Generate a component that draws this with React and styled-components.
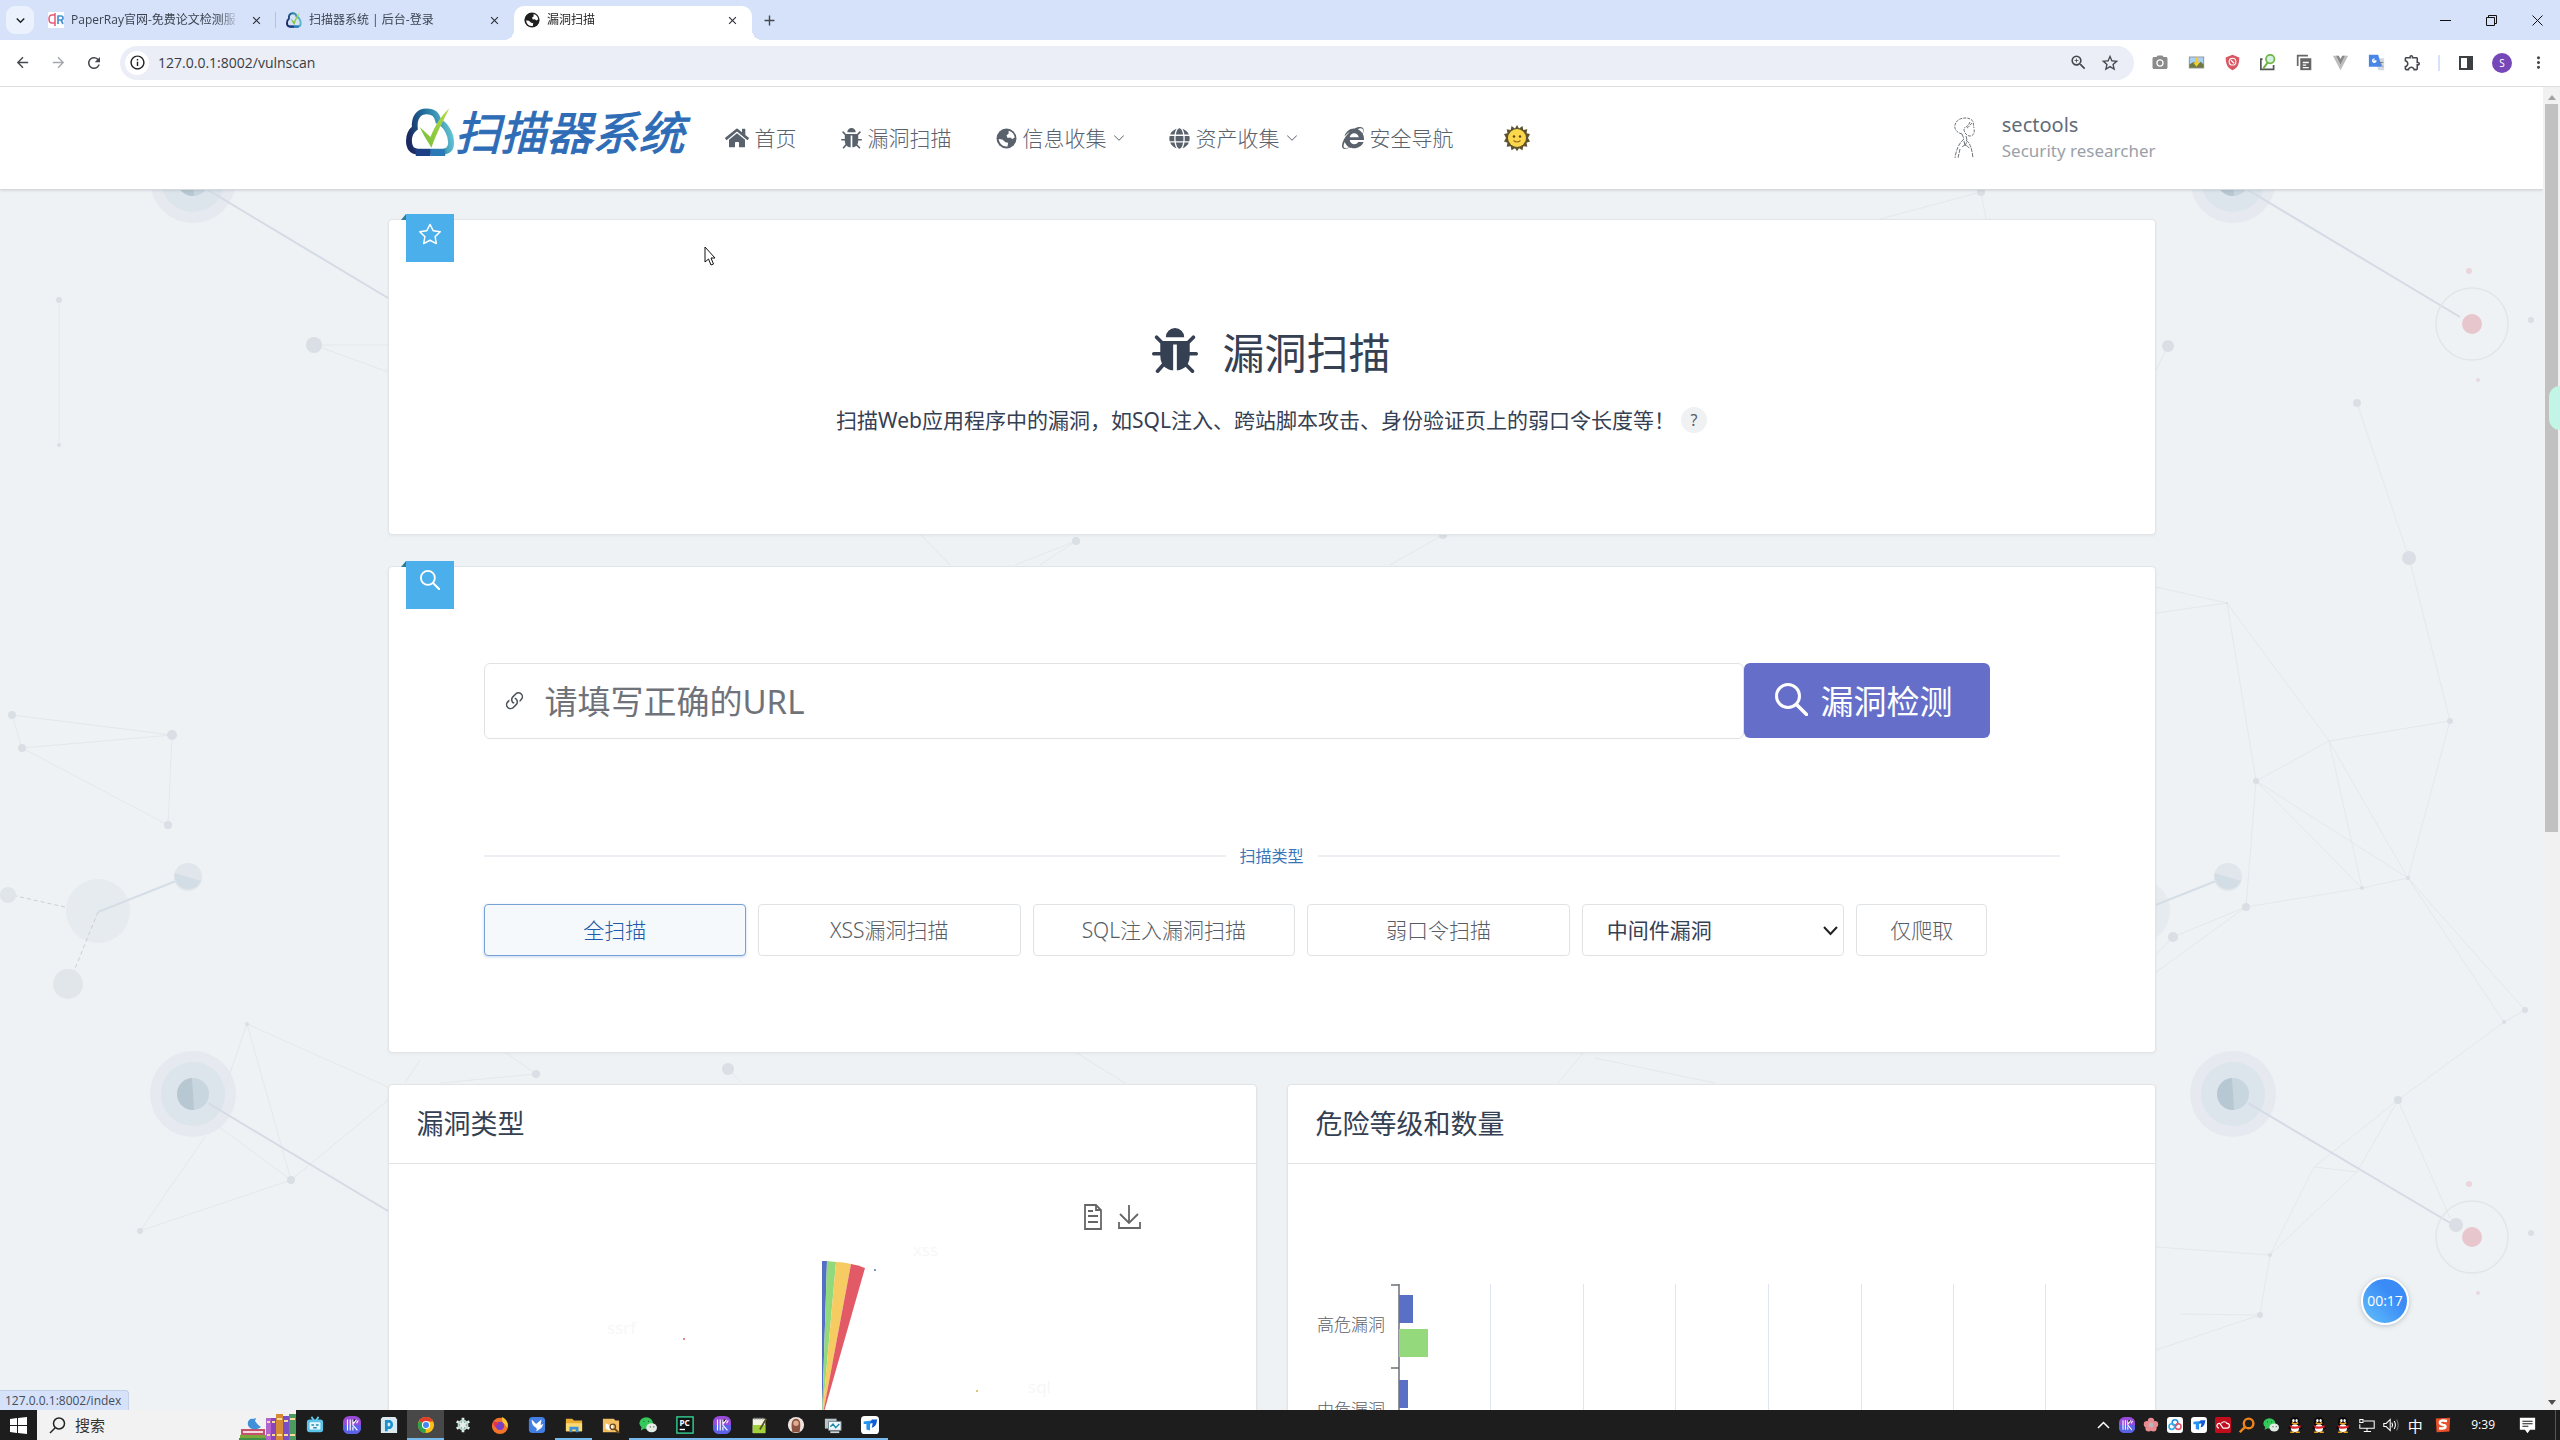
import React, { useState } from 'react';
import styled, { createGlobalStyle, css } from 'styled-components';
import { FaHome, FaGlobe, FaInternetExplorer } from 'react-icons/fa';
import { BsStar, BsLink45Deg, BsChevronDown } from 'react-icons/bs';
import {
  MdArrowBack,
  MdArrowForward,
  MdRefresh,
  MdInfoOutline,
  MdZoomIn,
  MdStarBorder,
  MdPhotoCamera,
  MdOutlineExtension,
  MdMoreVert,
  MdClose,
  MdAdd,
  MdKeyboardArrowDown,
} from 'react-icons/md';

const GlobalStyle = createGlobalStyle`
  * {
    box-sizing: border-box;
  }
  body {
    margin: 0;
    font-family: "Noto Sans", "Noto Sans CJK SC", sans-serif;
    font-size: 21px;
    line-height: 30px;
    color: #354052;
  }
  button, input, select {
    font-family: inherit;
    font-size: inherit;
    color: inherit;
  }
  button {
    padding: 0;
    border: 0;
    background: none;
    cursor: pointer;
  }
  a {
    color: inherit;
    text-decoration: none;
  }
  h1, h2, p {
    margin: 0;
    font-weight: 400;
  }
  svg {
    display: block;
    flex: none;
  }
`;

const Screen = styled.div`
  display: flex;
  flex-direction: column;
  height: 100vh;
  overflow: hidden;
`;

/* ---------- browser ---------- */

const TabStrip = styled.div`
  display: flex;
  align-items: center;
  height: 40px;
  padding-left: 6px;
  background: #d5e2fa;
  font-family: "Open Sans", "Noto Sans CJK SC", sans-serif;
  font-size: 12px;
  line-height: 18px;
  color: #3c4350;
`;

const TabSearch = styled.button`
  display: grid;
  place-items: center;
  width: 28px;
  height: 28px;
  margin-right: 4px;
  border-radius: 9px;
  background: #ebf2fe;
  color: #1f1f1f;
`;

const Tab = styled.div`
  position: relative;
  display: flex;
  align-items: center;
  gap: 7px;
  width: 238px;
  height: 34px;
  margin-top: 6px;
  padding: 0 10px 6px;
  border-radius: 10px 10px 0 0;
  ${({ $active }) =>
    $active &&
    css`
      background: #fff;
      color: #1f1f1f;

      &::before, &::after {
        content: '';
        position: absolute;
        bottom: 0;
        width: 10px;
        height: 10px;
      }
      &::before {
        right: 100%;
        background: radial-gradient(circle at 0 0, transparent 10px, #fff 10px);
      }
      &::after {
        left: 100%;
        background: radial-gradient(circle at 100% 0, transparent 10px, #fff 10px);
      }
    `}
`;

const TabTitle = styled.span`
  flex: 1;
  overflow: hidden;
  white-space: nowrap;
  mask-image: linear-gradient(to right, #000 88%, transparent);
`;

const PlainIconButton = styled.button`
  display: grid;
  place-items: center;
  width: ${({ $width }) => $width || 36}px;
  height: 28px;
  color: ${({ $color }) => $color || '#45494e'};
`;

const TabDivider = styled.span`
  width: 1px;
  height: 16px;
  margin-left: -1px;
  background: #a9c4f2;
`;

const WindowControls = styled.div`
  display: flex;
  margin-left: auto;
`;

const Toolbar = styled.div`
  display: flex;
  align-items: center;
  height: 47px;
  padding: 0 4px 1px;
  border-bottom: 1px solid #dcdee1;
  background: #fff;
`;

const AddressBar = styled.label`
  display: flex;
  flex: 1;
  align-items: center;
  height: 34px;
  margin: 0 8px;
  padding: 0 8px 0 5px;
  border-radius: 17px;
  background: #ebeef6;
`;

const SiteInfo = styled.span`
  display: grid;
  place-items: center;
  width: 24px;
  height: 24px;
  margin-right: 9px;
  border-radius: 50%;
  background: #fff;
  color: #202124;
`;

const AddressInput = styled.input`
  flex: 1;
  padding: 0;
  border: 0;
  outline: 0;
  background: none;
  font-family: "Open Sans", sans-serif;
  font-size: 14px;
  color: #3a3d42;
`;

const ToolDivider = styled.span`
  width: 2px;
  height: 16px;
  margin: 0 8px;
  background: #d5e2fa;
`;

const ProfileDot = styled.span`
  display: grid;
  place-items: center;
  width: 20px;
  height: 20px;
  border-radius: 50%;
  background: #7647b8;
  color: #fff;
  font-size: 10px;
  line-height: 20px;
`;

/* ---------- page ---------- */

const Viewport = styled.div`
  position: relative;
  display: flex;
  flex: 1;
  min-height: 0;
  background: #eef2f4;
`;

const Page = styled.div`
  position: relative;
  flex: 1;
  min-width: 0;
  overflow: hidden;
`;

const Backdrop = styled.svg`
  position: absolute;
  inset: 0;
  width: 100%;
  height: 100%;
`;

const Container = styled.div`
  position: relative;
  max-width: 1768px;
  margin: 0 auto;
`;

const SiteHeader = styled.header`
  position: relative;
  height: 103px;
  border-bottom: 1px solid #d6d9dc;
  background: #fff;
  box-shadow: 0 1px 2px rgba(60, 70, 80, 0.12);
`;

const HeaderRow = styled(Container)`
  display: flex;
  align-items: center;
  height: 102px;
  padding-left: 18px;
`;

const Brand = styled.a`
  display: flex;
  align-items: center;
  width: 283px;
  margin: -12px 36px 0 0;
  font-size: 46px;
  line-height: 56px;
  font-style: italic;
  color: #2f6cb6;
  -webkit-text-stroke: 1px #2f6cb6;
  white-space: nowrap;
`;

const Nav = styled.nav`
  display: flex;
  align-items: center;
  gap: 44px;
`;

const navItem = css`
  display: flex;
  align-items: center;
  gap: 6px;
  font-size: 21px;
  font-weight: 300;
  line-height: 30px;
  color: #59616c;
  white-space: nowrap;
`;

const NavLink = styled.a`
  ${navItem}
`;

const NavMenu = styled.button`
  ${navItem}
`;

const ThemeToggle = styled.button`
  margin-left: 6px;
`;

const User = styled.div`
  display: flex;
  align-items: center;
  gap: 26px;
  margin-left: auto;
`;

const UserName = styled.div`
  font-size: 20px;
  line-height: 26px;
  color: #626b78;
`;

const UserRole = styled.div`
  font-size: 17px;
  line-height: 26px;
  color: #9a9fa8;
`;

const Content = styled(Container)`
  display: flex;
  flex-direction: column;
  gap: 31px;
  padding-top: 29px;
`;

const Card = styled.section`
  position: relative;
  flex: 1;
  min-width: 0;
  border: 1px solid #e1e5e8;
  border-radius: 4px;
  background: #fff;
  box-shadow: 0 1px 3px rgba(35, 46, 60, 0.05);
`;

const Ribbon = styled.div`
  position: absolute;
  top: -6px;
  left: 17px;
  display: flex;
  justify-content: center;
  width: 48px;
  height: 48px;
  padding-top: 9px;
  background: #4bafeb;
  color: #fff;

  &::before {
    content: '';
    position: absolute;
    top: 0;
    right: 100%;
    border-bottom: 6px solid #2c7d97;
    border-left: 5px solid transparent;
  }
`;

const Hero = styled.div`
  display: flex;
  flex-direction: column;
  align-items: center;
  gap: 21px;
  padding: 102px 16px 99px;
`;

const HeroTitle = styled.h1`
  display: flex;
  align-items: center;
  gap: 24px;
  font-size: 42px;
  line-height: 62px;

  svg {
    margin-bottom: 4px;
  }
`;

const HeroText = styled.p`
  display: flex;
  align-items: center;
  gap: 6px;
  line-height: 30px;
`;

const Help = styled.button`
  width: 26px;
  height: 26px;
  border-radius: 50%;
  background: #f0f1f3;
  font-size: 16px;
  line-height: 26px;
  color: #555d69;
`;

const ScanForm = styled.form`
  padding: 96px 95px;
`;

const SearchRow = styled.div`
  display: flex;
  margin-right: 70px;
`;

const UrlField = styled.label`
  display: flex;
  flex: 1;
  align-items: center;
  gap: 18px;
  height: 76px;
  padding: 0 17px;
  border: 1px solid #e0e3e6;
  border-radius: 6px;
  color: #4d535b;
`;

const UrlInput = styled.input`
  flex: 1;
  min-width: 0;
  padding: 0;
  border: 0;
  outline: 0;
  background: none;
  font-size: 33px;

  &::placeholder {
    color: #6f7379;
    opacity: 1;
  }
`;

const ScanButton = styled.button`
  display: flex;
  align-items: center;
  justify-content: center;
  gap: 13px;
  width: 246px;
  height: 75px;
  padding: 0 6px 2px 0;
  border-radius: 6px;
  background: #656fc9;
  font-size: 33px;
  color: #fff;
`;

const Divider = styled.div`
  display: flex;
  align-items: center;
  gap: 14px;
  margin: 105px 0 36px;
  font-size: 16px;
  line-height: 24px;
  color: #3a75b8;

  &::before, &::after {
    content: '';
    flex: 1;
    height: 2px;
    background: #eceff3;
  }
`;

const Options = styled.div`
  display: grid;
  grid-template-columns: repeat(5, 2fr) 1fr;
  gap: 12px;
  margin-right: 72px;
`;

const Option = styled.button`
  height: 52px;
  padding-bottom: 2px;
  border: 1px solid ${({ $active }) => ($active ? '#78a2d6' : '#e0e3e6')};
  border-radius: 4px;
  background: ${({ $active }) => ($active ? '#f5f9fc' : '#fff')};
  box-shadow: ${({ $active }) => ($active ? '0 1px 3px rgba(60, 120, 210, 0.3)' : 'none')};
  font-weight: 300;
  color: ${({ $active }) => ($active ? '#1f5aa8' : '#575d65')};
`;

const SelectBox = styled.span`
  position: relative;
  display: block;

  svg {
    position: absolute;
    top: 19px;
    right: 6px;
    color: #222;
    pointer-events: none;
  }
`;

const MiddlewareSelect = styled.select`
  width: 100%;
  height: 52px;
  padding: 0 24px;
  border: 1px solid #e0e3e6;
  border-radius: 4px;
  background: #fff;
  appearance: none;
`;

const ChartRow = styled.div`
  display: flex;
  gap: 30px;
`;

const CardTitle = styled.h2`
  padding: 19px 28px;
  border-bottom: 1px solid #e1e5e8;
  font-size: 27px;
  line-height: 40px;
`;

const ChartArea = styled.div`
  height: 520px;
  overflow: hidden;
`;

const ScrollTrack = styled.div`
  display: flex;
  flex-direction: column;
  align-items: center;
  width: 17px;
  padding: 7px 0 4px;
  background: #f1f1f1;
`;

const ScrollThumb = styled.div`
  flex: 0 1 728px;
  width: 13px;
  margin: 4px 0 auto;
  background: #c1c1c1;
`;

const Timer = styled.div`
  position: absolute;
  right: 151px;
  bottom: 85px;
  width: 48px;
  height: 48px;
  border: 2px solid #fff;
  border-radius: 50%;
  background: linear-gradient(45deg, #62c0fb, #3a8bf6 65%);
  box-shadow: 0 1px 5px rgba(80, 100, 120, 0.35);
  color: #fff;
  font-family: "Open Sans", sans-serif;
  font-size: 14px;
  line-height: 44px;
  text-align: center;
`;

const SideHandle = styled.div`
  position: absolute;
  top: 299px;
  right: 0;
  width: 11px;
  height: 44px;
  border-radius: 22px 0 0 22px;
  background: #c2f5e5;
`;

const StatusUrl = styled.div`
  position: absolute;
  bottom: 0;
  left: 0;
  padding: 0 7px 0 5px;
  border-top: 1px solid #c3cfe2;
  border-right: 1px solid #c3cfe2;
  border-radius: 0 4px 0 0;
  background: #d5e2fa;
  font-family: "Open Sans", sans-serif;
  font-size: 12px;
  line-height: 19px;
  color: #474d57;
`;

const Pointer = styled.svg`
  position: absolute;
  top: 159px;
  left: 704px;
`;

/* ---------- taskbar ---------- */

const Taskbar = styled.footer`
  display: flex;
  align-items: stretch;
  height: 30px;
  background: #1d1d1d;
  color: #fff;
`;

const TaskButton = styled.button`
  display: grid;
  place-items: center;
  width: 37px;
  ${({ $active }) => $active && 'background: #484848;'}
  ${({ $running }) => $running && 'box-shadow: inset 0 -2px 0 0 #76b9ed;'}
`;

const TaskSearch = styled.label`
  display: flex;
  align-items: center;
  width: 259px;
  padding-left: 12px;
  background: #f2f2f2;
  color: #222;
`;

const TaskInput = styled.input`
  flex: 1;
  min-width: 0;
  margin-left: 9px;
  padding: 0;
  border: 0;
  background: none;
  font-size: 15px;

  &::placeholder {
    color: #333;
    opacity: 1;
  }
`;

const Tray = styled.div`
  display: flex;
  align-items: center;
  margin-left: auto;
  margin-right: 4px;
  padding-right: 16px;
  border-right: 1px solid #55585b;
`;

const TrayButton = styled.button`
  display: grid;
  place-items: center;
  width: 24px;
  height: 30px;
  font-size: 15px;
  color: #fff;
`;

const InputMethod = styled.button`
  margin-left: 8px;
`;

const Clock = styled.time`
  margin: 0 20px;
  font-family: "Open Sans", sans-serif;
  font-size: 12px;
`;

/* ---------- drawings ---------- */

const CloudLogo = ({ width, height }) => (
  <svg width={width} height={height} viewBox="0 0 50 50">
    <defs>
      <linearGradient id="cloud" x1="0" y1="0.6" x2="1" y2="0.4">
        <stop offset="0" stopColor="#1c2a63" />
        <stop offset="0.45" stopColor="#1f6f9c" />
        <stop offset="1" stopColor="#62c3d3" />
      </linearGradient>
      <linearGradient id="check" x1="0" y1="1" x2="1" y2="0">
        <stop offset="0" stopColor="#6fbf35" />
        <stop offset="1" stopColor="#b9d94a" />
      </linearGradient>
    </defs>
    <path
      d="M12 45 C6 45 3 41 3 34 C3 27 5 24 9 21 C8 10 13 4 21 4 C28 4 32 8 33 14 C41 18 46 27 46 36 C46 42 43 45 37 45 Z"
      fill="none"
      stroke="url(#cloud)"
      strokeWidth="6"
    />
    <path d="M10 46 L25 46" stroke="#1d3f85" strokeWidth="7" />
    <path d="M25 46 L40 46" stroke="#2c79b8" strokeWidth="7" />
    <path d="M14 20 L25 30 C30 18 36 8 44 1 C38 14 31 26 26 41 C21 33 17 27 14 20 Z" fill="url(#check)" />
  </svg>
);

const BugIcon = ({ size }) => (
  <svg width={size} height={size} viewBox="32 64 1600 1600" fill="currentColor">
    <path d="M1632 960q0 26-19 45t-45 19h-224q0 171-67 290l208 209q19 19 19 45t-19 45q-18 19-45 19t-45-19l-198-197q-5 5-15 13t-42 28.500-65 36.500-82 29-97 13v-896h-128v896q-51 0-101.500-13.500t-87-33-66-39-43.500-32.500l-15-14-183 207q-20 21-48 21-24 0-43-16-19-18-20.500-44.500t15.500-46.500l202-227q-58-114-58-274h-224q-26 0-45-19t-19-45 19-45 45-19h224v-294l-173-173q-19-19-19-45t19-45 45-19 45 19l173 173h844l173-173q19-19 45-19t45 19 19 45-19 45l-173 173v294h224q26 0 45 19t19 45zm-480-576h-640q0-133 93.500-226.500t226.500-93.500 226.500 93.500 93.500 226.500z" />
  </svg>
);

const EarthIcon = ({ size }) => (
  <svg width={size} height={size} viewBox="0 0 20 20">
    <circle cx="10" cy="10" r="9.500" fill="currentColor" />
    <path d="M12 2.500c3.500.800 5.500 3.500 5.800 6.500l-2.300 1.500-2-1.500-2.500.500-1-2.500 2-1.500z" fill="#fff" />
    <path d="M2.500 10.500l3.500.500 3 2.500 2.500.500-.500 3.500c-4 .800-7.500-2-8.500-7z" fill="#fff" />
  </svg>
);

const SearchIcon = ({ size, weight }) => (
  <svg width={size} height={size} viewBox="0 0 33 33" fill="none" stroke="currentColor" strokeWidth={weight}>
    <circle cx="13" cy="13" r="11.500" />
    <path d="M21.500 21.500L31.500 31.500" strokeWidth={weight + 0.5} strokeLinecap="round" />
  </svg>
);

const SunIcon = () => (
  <svg width="26" height="26" viewBox="0 0 26 26">
    <path
      d="M13 0l2 3.500L18.500 1l.8 4 4-.8-.8 4 3.500.8-2 4 2 3.500-3.500 1.300.8 4-4-.6-.8 4-3.500-2-2 3-2-3-3.500 2-.8-4-4 .6.8-4L0 16.500 2 13 0 9l3.500-.8-.8-4 4 .8.8-4L11 3.500z"
      fill="#5d532f"
    />
    <circle cx="13" cy="13" r="9" fill="#fbd84b" />
    <circle cx="10" cy="11.500" r="1.200" fill="#59431b" />
    <circle cx="16" cy="11.500" r="1.200" fill="#59431b" />
    <path d="M9.500 15.500q3.500 3 7 0" fill="none" stroke="#9b6a1f" strokeWidth="1.200" />
  </svg>
);

const AvatarDrawing = () => (
  <svg width="22" height="42" viewBox="0 0 22 42" fill="none" stroke="#70757b" strokeWidth="1">
    <path d="M8 17C3 16 0 12 1 8 2 3 7 1 11 1c4 0 7 1 8 4 1 2 0 4 1 6" strokeDasharray="3 1" />
    <path d="M18 6c-2 2-3 4-5 5M16 5c-1 3-3 5-6 6M10 12c0 4 3 7 6 7 3 0 5-3 4-7" strokeDasharray="3 1" />
    <path
      d="M8 17l2 5M12 19l1 4M10 22C5 26 2 33 1 41M6 32L4 41M12 23c5 4 6 10 7 18M8 30c3-3 5-2 8 2M10 24l1 5 2-5"
      strokeDasharray="4 1"
    />
  </svg>
);

const lines = [
  [208, 190, 388, 298], [208, 1103, 388, 1211],
  [2248, 190, 2460, 317], [2248, 1103, 2452, 1224],
];

const faintLines = [
  [59, 300, 59, 445], [314, 345, 388, 345], [314, 345, 388, 372],
  [12, 715, 172, 735], [22, 748, 172, 735], [22, 748, 168, 825], [172, 735, 168, 825], [12, 715, 22, 748],
  [247, 1024, 388, 1087], [247, 1024, 225, 1087], [247, 1024, 291, 1180], [210, 1120, 291, 1180],
  [140, 1231, 291, 1180], [140, 1231, 205, 1137], [291, 1180, 388, 1100],
  [2168, 346, 2156, 370], [2357, 403, 2409, 558], [2409, 558, 2450, 721], [2450, 721, 2329, 741],
  [2450, 721, 2408, 878], [2329, 741, 2256, 781], [2329, 741, 2362, 888], [2329, 741, 2408, 878],
  [2256, 781, 2246, 907], [2256, 781, 2362, 888], [2256, 781, 2408, 878], [2408, 878, 2362, 888],
  [2362, 888, 2246, 907], [2246, 907, 2173, 937], [2173, 937, 2156, 955], [2246, 907, 2156, 972],
  [2156, 587, 2227, 603], [2156, 613, 2227, 603], [2227, 603, 2256, 781], [2227, 603, 2329, 741],
  [2408, 878, 2504, 1022], [2408, 878, 2525, 1010], [2504, 1022, 2525, 1010], [2504, 1022, 2398, 1100],
  [2398, 1100, 2314, 1167], [2398, 1100, 2357, 1172], [2398, 1100, 2450, 1218], [2314, 1167, 2357, 1172],
  [2314, 1167, 2270, 1255], [2357, 1172, 2270, 1255], [2270, 1255, 2260, 1315], [2156, 1247, 2270, 1255],
  [2260, 1315, 2156, 1350], [2260, 1315, 2180, 1314],
  [1076, 541, 1015, 565], [1076, 541, 1040, 565], [1443, 535, 1390, 565], [920, 534, 950, 565],
  [505, 1052, 536, 1074], [536, 1074, 440, 1083], [420, 1060, 405, 1083], [728, 1069, 742, 1083],
  [1558, 1083, 1583, 1053], [1595, 1058, 1715, 1083], [1075, 1052, 1125, 1083], [1981, 192, 1986, 219],
  [1981, 192, 1880, 219],
];

const dots = [
  [59, 300, 3], [59, 445, 2], [314, 345, 8], [12, 715, 4], [22, 748, 4], [172, 735, 5], [168, 825, 4],
  [247, 1024, 2], [291, 1180, 4], [140, 1231, 3], [2168, 346, 6], [2357, 403, 4], [2409, 558, 7],
  [2450, 721, 3], [2408, 878, 2], [2362, 888, 2], [2246, 907, 4], [2173, 937, 5], [2256, 781, 3],
  [2525, 1010, 3], [2504, 1022, 2], [2398, 1100, 4], [2270, 1255, 2], [2260, 1315, 3], [2456, 1225, 7],
  [2531, 320, 3], [2531, 1233, 3], [1076, 541, 4], [1443, 535, 4], [536, 1074, 4], [728, 1069, 6],
  [1981, 192, 4], [2227, 603, 1],
];

const Hub = ({ x, y }) => (
  <g transform={`translate(${x} ${y})`}>
    <circle r="43" fill="#e6eaf0" />
    <circle r="32" fill="#dce4ec" />
    <circle r="16" fill="#c8d6e0" />
    <path d="M-1 -16 A16 16 0 0 0 1 16 Z" fill="#b8c8d3" />
  </g>
);

const Target = ({ x, y }) => (
  <g transform={`translate(${x} ${y})`}>
    <circle r="36" fill="none" stroke="#e3e5e8" strokeWidth="1.500" />
    <circle r="10" fill="#e8c6cd" />
    <circle cx="-3" cy="-53" r="3" fill="#ead6da" />
    <circle cx="6" cy="56" r="2" fill="#e6dadd" />
  </g>
);

const Satellite = ({ x, y }) => (
  <g transform={`translate(${x} ${y})`}>
    <circle r="32" fill="#e6ebef" />
    <path d="M0 1 L78 -30" stroke="#d5dee6" strokeWidth="2" />
    <circle cx="90" cy="-34" r="14" fill="#e0e6eb" />
    <path d="M76.500 -38 L103 -30 A14 14 0 0 1 76.500 -38 Z" fill="#d3dde5" />
    <path d="M0 1 L-24 60 M-33 -4 L-82 -15" stroke="#d2cdd1" strokeDasharray="4 3" />
    <circle cx="-30" cy="73" r="15" fill="#e1e6ea" />
    <circle cx="-90" cy="-16" r="8" fill="#dfe5e9" />
  </g>
);

const NetworkBackdrop = () => (
  <Backdrop viewBox="0 87 2543 1323" preserveAspectRatio="xMidYMin slice" aria-hidden="true">
    <Hub x={193} y={180} />
    <Hub x={193} y={1094} />
    <Hub x={2233} y={180} />
    <Hub x={2233} y={1094} />
    <Satellite x={98} y={911} />
    <Satellite x={2138} y={911} />
    {faintLines.map(([x1, y1, x2, y2], i) => (
      <line key={i} x1={x1} y1={y1} x2={x2} y2={y2} stroke="#e4e8eb" />
    ))}
    {lines.map(([x1, y1, x2, y2]) => (
      <line key={`${x1}-${y1}`} x1={x1} y1={y1} x2={x2} y2={y2} stroke="#d5dbe5" strokeWidth="2" />
    ))}
    <Target x={2472} y={324} />
    <Target x={2472} y={1237} />
    {dots.map(([cx, cy, r]) => (
      <circle key={`${cx}-${cy}`} cx={cx} cy={cy} r={r} fill="#d9dfe4" />
    ))}
  </Backdrop>
);

const PieChart = () => (
  <svg width="868" height="520" viewBox="390 1163 868 520">
    <g fill="none" stroke="#666" strokeWidth="1.800">
      <path d="M1086 1204h11l5 5v19h-16zM1097 1204v5h5M1089 1210h5M1089 1215h10M1089 1221h10" />
      <path d="M1130 1204v18M1121 1213l9 9 9-9M1120 1221v6h21v-6" />
    </g>
    <path d="M823 1418 L823 1260 L828 1260 Z" fill="#5470c6" />
    <path d="M823 1418 L828 1260 L837 1261 Z" fill="#91d97a" />
    <path d="M823 1418 L837 1261 Q845 1261 852 1263 Z" fill="#f5cb62" />
    <path d="M823 1418 L852 1263 Q859 1264 866 1267 Z" fill="#e25a66" />
    <circle cx="876" cy="1269" r="1" fill="#5470c6" />
    <circle cx="685" cy="1338" r="1" fill="#e25a66" />
    <circle cx="978" cy="1390" r="1" fill="#d9b24a" />
    <g fontSize="17" fill="#f7f7f7">
      <text x="914" y="1255">xss</text>
      <text x="608" y="1333">ssrf</text>
      <text x="1029" y="1392">sql</text>
    </g>
  </svg>
);

const BarChart = () => (
  <svg width="868" height="520" viewBox="1289 1163 868 520">
    {[1491, 1584, 1676, 1769, 1862, 1954, 2046].map((x) => (
      <path key={x} d={`M${x}.500 1283V1640`} stroke="#e0e6f1" />
    ))}
    <path d="M1400 1283V1640M1392 1284h8M1392 1367h8M1392 1451h8" stroke="#6e7079" strokeWidth="1.500" />
    <rect x="1400" y="1294" width="14" height="28" fill="#5a70c4" />
    <rect x="1400" y="1328" width="29" height="28" fill="#94d97c" />
    <rect x="1400" y="1379" width="9" height="28" fill="#5a70c4" />
    <g fontSize="17" fontWeight="300" fill="#5c5e66">
      <text x="1318" y="1330">高危漏洞</text>
      <text x="1318" y="1415">中危漏洞</text>
    </g>
  </svg>
);

const extensionIcons = {
  picture: (
    <>
      <path d="M1 3h18v14H1z" fill="#8d8d8d" />
      <path d="M2 4h16v8H2z" fill="#a9d1f5" />
      <path d="M2 12l5-3 4 3 4-3 3 3v4H2z" fill="#6c7a44" />
      <path d="M9 4h3v6h2l-4 5-4-5h3z" fill="#f5cc2f" />
    </>
  ),
  shield: (
    <>
      <path d="M10 1l8 3c0 8-2 12-8 15C4 16 2 12 2 4z" fill="#d95763" />
      <circle cx="10" cy="9" r="4" fill="none" stroke="#fff" strokeWidth="1.200" />
      <path d="M8 7l4 4" stroke="#fff" strokeWidth="1.500" />
    </>
  ),
  debug: (
    <>
      <path d="M3 6H1v12h15v-4M16 17v-4" fill="none" stroke="#555" strokeWidth="2" />
      <circle cx="12" cy="6" r="5" fill="#d7efe3" stroke="#6fb544" strokeWidth="2" />
      <path d="M9 10l-5 7" stroke="#6fb544" strokeWidth="2.500" />
    </>
  ),
  copy: (
    <>
      <path d="M2 14V2h12" fill="none" stroke="#666" strokeWidth="2" />
      <path d="M5 5h13v14H5z" fill="#666" />
      <path d="M8 10h7M8 13h4M8 16h7" stroke="#fff" strokeWidth="1.500" />
    </>
  ),
  vue: (
    <>
      <path d="M1 2h6l3 6 3-6h6l-9 17z" fill="#bdbdbd" />
      <path d="M5 2h3l2 4 2-4h3l-5 10z" fill="#878787" />
    </>
  ),
  translate: (
    <>
      <path d="M9 5h10v14h-7z" fill="#d3d9df" />
      <path d="M1 1h11l4 14H1z" fill="#4a86e8" />
      <path d="M10 8H7v1h2a2 2 0 1 1-1-3" fill="none" stroke="#fff" strokeWidth="1.300" />
      <path d="M13 10h5M15 9c0 4 1 5 3 6" fill="none" stroke="#6f7b86" />
    </>
  ),
};

const glyphs = {
  tv: (
    <>
      <path d="M6 1l3 4M14 1l-3 4" stroke="#62cbee" strokeWidth="2" />
      <rect x="1" y="4" width="18" height="14" rx="3" fill="#5bc4e8" />
      <rect x="4" y="7" width="12" height="8" rx="1" fill="#e7f8fd" />
      <path d="M6 10h3M11 10h3M8 13h4" stroke="#268bb0" strokeWidth="1.500" />
    </>
  ),
  maze: (
    <>
      <rect width="20" height="20" rx="7" fill="#9a4bdc" />
      <path d="M0 10h20v4q-1 6-7 6H7q-6 0-7-6z" fill="#5a62e6" />
      <path d="M5 4v12M8 4v12M11 4v5l4-5M11 10l5 6M11 12v4M15 8l2-3" stroke="#fff" strokeWidth="1.300" />
    </>
  ),
  paper: (
    <>
      <path d="M3 1h14l2 3v15H1V3z" fill="#d9e9ef" />
      <path d="M7 17V6h4a4 4 0 0 1 0 7H8" fill="none" stroke="#1b91d0" strokeWidth="3" />
    </>
  ),
  chrome: (
    <>
      <circle cx="10" cy="10" r="9" fill="#fbc116" />
      <path d="M10 10L2.200 5.500A9 9 0 0 1 18 6H10z" fill="#e33b2e" />
      <path d="M10 10l-.5 9A9 9 0 0 1 2.200 5.500z" fill="#2ba24c" />
      <circle cx="10" cy="10" r="4.500" fill="#fff" />
      <circle cx="10" cy="10" r="3.300" fill="#4285f4" />
    </>
  ),
  knot: (
    <g fill="none" stroke="#e6eceb" strokeWidth="3">
      <path d="M10 2v16M3 6l14 8M3 14l14-8" />
      <circle cx="10" cy="10" r="5" stroke="#b6dcd0" strokeWidth="2" />
    </g>
  ),
  firefox: (
    <>
      <circle cx="10" cy="11" r="9" fill="#f5742a" />
      <path d="M12 1c5 2 8 7 6 12-2-3-3-4-5-6 0-2-1-3-1-6z" fill="#fcc936" />
      <circle cx="10" cy="11" r="4.500" fill="#7642c9" />
      <path d="M3 6c3 0 5 1 6 3-3 0-4 2-3 4-3-1-4-4-3-7z" fill="#e5344f" />
    </>
  ),
  bird: (
    <>
      <rect x="1" y="1" width="18" height="18" rx="4" fill="#437fe2" />
      <path d="M4 4l5 5 6-5-1 6 3-1c-2 6-5 6-6 7l-2 1c1-2 1-3 0-4-3-1-5-4-5-9z" fill="#fff" />
    </>
  ),
  folder: (
    <>
      <path d="M1 3h7l2 2h9v12H1z" fill="#e9ae31" />
      <path d="M1 8h18v9H1z" fill="#fad874" />
      <path d="M5 12h10v6h-3v-3H8v3H5z" fill="#3c92d7" />
    </>
  ),
  everything: (
    <>
      <path d="M1 3h12l2 2h4v13H1z" fill="#f4bf63" />
      <path d="M4 8l4 2 4-2v6l-4 2-4-2z" fill="#fff" />
      <circle cx="12" cy="12" r="3" fill="none" stroke="#6a4a21" strokeWidth="1.500" />
      <path d="M14 14l5 5" stroke="#6a4a21" strokeWidth="2" />
    </>
  ),
  wechat: (
    <>
      <ellipse cx="8" cy="8" rx="7.500" ry="6.500" fill="#34c95b" />
      <path d="M3 12l-1 4 4-2z" fill="#34c95b" />
      <ellipse cx="14" cy="13" rx="6" ry="5" fill="#e3ebe4" />
      <path d="M5 6h1M10 6h1M12 12h1M16 12h1" stroke="#27573a" strokeWidth="1.500" />
    </>
  ),
  pycharm: (
    <>
      <rect x="1" y="1" width="18" height="18" fill="#101313" stroke="#35d797" strokeWidth="1.500" />
      <text x="4" y="11" fontSize="9" fontWeight="700" fill="#fff">PC</text>
      <path d="M4 15h6" stroke="#fff" strokeWidth="1.500" />
    </>
  ),
  notepad: (
    <>
      <path d="M3 3h14v16H3z" fill="#f4f6e3" />
      <path d="M3 10h14v9H3z" fill="#a2d23b" />
      <path d="M4 3h12" stroke="#8d9195" strokeWidth="2" strokeDasharray="2 1" />
      <path d="M18 3l-7 12" stroke="#5a5128" strokeWidth="2" />
    </>
  ),
  portrait: (
    <>
      <circle cx="10" cy="10" r="9" fill="#eee3dd" />
      <path d="M6 18c-2-9-1-15 4-15 6 0 5 8 4 15z" fill="#8c5543" />
      <circle cx="10" cy="8" r="3" fill="#e0ab8f" />
    </>
  ),
  monitor: (
    <>
      <path d="M1 3h13v11H1z" fill="#b9c5cb" />
      <path d="M5 6h14v10H5z" fill="#eff9fc" stroke="#738087" />
      <path d="M7 12l3-3 3 4 4-4" fill="none" stroke="#1b86ad" strokeWidth="1.500" />
      <path d="M7 18h10" stroke="#ccd5da" strokeWidth="2" />
    </>
  ),
  todesk: (
    <>
      <rect x="0" y="0" width="20" height="20" rx="4" fill="#fff" />
      <path d="M3 6l9-1-2 5v6l-4-1V9H3z" fill="#2793ef" />
      <path d="M12 4h6c-1 6-2 8-6 9l1-5h-3z" fill="#125bd6" />
    </>
  ),
  flower: (
    <>
      <g fill="#e98b91">
        <circle cx="10" cy="5" r="4" />
        <circle cx="5" cy="9" r="4" />
        <circle cx="15" cy="9" r="4" />
        <circle cx="7" cy="14" r="4" />
        <circle cx="13" cy="14" r="4" />
      </g>
      <circle cx="10" cy="10" r="3" fill="#b7b9bd" />
    </>
  ),
  netdisk: (
    <>
      <rect x="0" y="0" width="20" height="20" rx="4" fill="#fff" />
      <g fill="none" strokeWidth="2">
        <circle cx="10" cy="7" r="3.500" stroke="#288de0" />
        <circle cx="6" cy="12" r="3.500" stroke="#35b0ec" />
        <circle cx="14" cy="12" r="3.500" stroke="#e75265" />
      </g>
    </>
  ),
  cloud: (
    <>
      <rect width="20" height="20" rx="2" fill="#c20d1e" />
      <path d="M5 14a3 3 0 0 1 1-6l4 6h5a3 3 0 0 0 0-6 4 4 0 0 0-7 0" fill="none" stroke="#fff" strokeWidth="1.500" />
    </>
  ),
  magnifier: (
    <g fill="none" stroke="#ef851e">
      <circle cx="12" cy="8" r="6" strokeWidth="3" />
      <path d="M8 12l-7 7" strokeWidth="3" />
    </g>
  ),
  qq: (
    <>
      <path d="M10 0c5 0 7 4 6 9l3 6-4-1v4H5v-4l-4 1 3-6C3 4 5 0 10 0z" fill="#0a0a0a" />
      <ellipse cx="10" cy="14" rx="5" ry="5" fill="#fff" />
      <ellipse cx="8" cy="4.500" rx="1.500" ry="2" fill="#fff" />
      <ellipse cx="12" cy="4.500" rx="1.500" ry="2" fill="#fff" />
      <path d="M6 7q4 3 8 0" stroke="#f0a11c" strokeWidth="2" fill="none" />
      <path d="M3 10q7 4 14 0v3q-7 3-12 1z" fill="#e0242c" />
      <path d="M4 19h5M11 19h5" stroke="#f0a11c" strokeWidth="2" />
    </>
  ),
  network: (
    <g fill="none" stroke="#fff" strokeWidth="1.300">
      <path d="M6 5h13v9H1V9M1 3h4v4H1zM10 14v4M6 18h9" />
    </g>
  ),
  volume: (
    <g fill="none" stroke="#fff" strokeWidth="1.300">
      <path d="M1 8h3l5-5v14l-5-5H1z" />
      <path d="M11 7q2 3 0 6M14 5q3 5 0 10" />
      <path d="M17 3q4 7 0 14" stroke="#777" />
    </g>
  ),
  sogou: (
    <>
      <path d="M1 2l18-1-1 17-16 1z" fill="#e9512b" />
      <path d="M15 5Q6 3 6 7q0 2 4 3 4 0 3 3-1 2-8 1" fill="none" stroke="#fff" strokeWidth="3" />
    </>
  ),
  message: (
    <>
      <path d="M1 1h18v14h-6l-3 4-3-4H1z" fill="#fff" />
      <path d="M4 5h12M4 8h12M4 11h7" stroke="#1d1d1d" strokeWidth="1.200" />
    </>
  ),
};

const Glyph = ({ name, size = 18 }) => (
  <svg width={size} height={size} viewBox="0 0 20 20">{glyphs[name]}</svg>
);

const ExtensionIcon = ({ name }) => (
  <svg width="17" height="17" viewBox="0 0 20 20">{extensionIcons[name]}</svg>
);

const WindowIcon = ({ d }) => (
  <svg width="11" height="11" viewBox="0 0 11 11" fill="none" stroke="#111">
    <path d={d} />
  </svg>
);

const Books = () => (
  <svg width="58" height="30" viewBox="0 0 58 30">
    <path d="M2 25h26v4H2z" fill="#7aa63c" />
    <path d="M3 19h24v6H3z" fill="#c4506c" />
    <path d="M5 21h20v2H5z" fill="#f5d8dc" />
    <path d="M1 28h28v2H1z" fill="#3f8f4a" />
    <path d="M11 17c-3-4 0-9 4-8l3-1-1 3c2 3 4 5 6 6-4 3-9 3-12 0z" fill="#3f8fd9" />
    <path d="M28 8h5v22h-5z" fill="#b265cf" />
    <path d="M33 8h5v22h-5z" fill="#8a45b8" />
    <path d="M38 4h7v26h-7z" fill="#d58a35" />
    <path d="M45 6h6v24h-6z" fill="#7a4ec4" />
    <path d="M51 4h7v26h-7z" fill="#4a9a62" />
    <path
      d="M29 12h3M34 12h3M39 9h5M46 11h4M52 9h5M29 25h3M34 25h3M39 25h5M46 25h4M52 25h5"
      stroke="#f6dc96"
      strokeWidth="2"
    />
  </svg>
);

/* ---------- data ---------- */

const taskApps = [
  { name: 'tv' },
  { name: 'maze' },
  { name: 'paper' },
  { name: 'chrome', active: true, running: true },
  { name: 'knot' },
  { name: 'firefox' },
  { name: 'bird' },
  { name: 'folder', running: true },
  { name: 'everything' },
  { name: 'wechat', running: true },
  { name: 'pycharm', running: true },
  { name: 'maze', running: true },
  { name: 'notepad', running: true },
  { name: 'portrait', running: true },
  { name: 'monitor', running: true },
  { name: 'todesk', running: true },
];

const trayApps = ['maze', 'flower', 'netdisk', 'todesk', 'cloud', 'magnifier', 'wechat', 'qq', 'qq', 'qq', 'network', 'volume'];

const scanTypes = ['全扫描', 'XSS漏洞扫描', 'SQL注入漏洞扫描', '弱口令扫描'];

const BrowserTab = ({ icon, title, active }) => (
  <Tab $active={active}>
    {icon}
    <TabTitle>{title}</TabTitle>
    <PlainIconButton $width={20} $color="#2b2e33" aria-label="Close tab"><MdClose size={13} /></PlainIconButton>
  </Tab>
);

const Browser = () => (
  <>
    <TabStrip>
      <TabSearch aria-label="Search tabs"><MdKeyboardArrowDown size={17} /></TabSearch>
      <BrowserTab
        icon={
          <svg width="16" height="16" viewBox="0 0 16 16">
            <path d="M0 0h16v16H0z" fill="#fff" />
            <path d="M7 3H4Q1 3 1 7t3 4h3M7 1v13" fill="none" stroke="#e65a78" strokeWidth="1.500" />
            <path d="M10 12V4h3q2 0 2 2t-2 2h-3m3 0l2 4" fill="none" stroke="#4a93d8" strokeWidth="1.700" />
          </svg>
        }
        title="PaperRay官网-免费论文检测服"
      />
      <TabDivider />
      <BrowserTab icon={<CloudLogo width={16} height={16} />} title="扫描器系统 | 后台-登录" />
      <BrowserTab icon={<EarthIcon size={16} />} title="漏洞扫描" active />
      <PlainIconButton $width={34} aria-label="New tab"><MdAdd size={17} /></PlainIconButton>
      <WindowControls>
        <PlainIconButton $width={46} aria-label="Minimize"><WindowIcon d="M0 5.500h11" /></PlainIconButton>
        <PlainIconButton $width={46} aria-label="Restore"><WindowIcon d="M.5 2.500h8v8h-8zM2.500 2.500v-2h8v8h-2" /></PlainIconButton>
        <PlainIconButton $width={46} aria-label="Close"><WindowIcon d="M.5.500l10 10M10.500.500l-10 10" /></PlainIconButton>
      </WindowControls>
    </TabStrip>
    <Toolbar>
      <PlainIconButton aria-label="Back"><MdArrowBack size={17} /></PlainIconButton>
      <PlainIconButton $color="#a5a8ac" aria-label="Forward"><MdArrowForward size={17} /></PlainIconButton>
      <PlainIconButton aria-label="Reload"><MdRefresh size={18} /></PlainIconButton>
      <AddressBar>
        <SiteInfo><MdInfoOutline size={17} /></SiteInfo>
        <AddressInput aria-label="Address" defaultValue="127.0.0.1:8002/vulnscan" />
        <PlainIconButton as="span" $width={32}><MdZoomIn size={19} /></PlainIconButton>
        <PlainIconButton as="span" $width={32}><MdStarBorder size={20} /></PlainIconButton>
      </AddressBar>
      <PlainIconButton $color="#8b8b8b" aria-label="Screenshot"><MdPhotoCamera size={18} /></PlainIconButton>
      {Object.keys(extensionIcons).map((name) => (
        <PlainIconButton key={name} aria-label={name}><ExtensionIcon name={name} /></PlainIconButton>
      ))}
      <PlainIconButton aria-label="Extensions"><MdOutlineExtension size={19} /></PlainIconButton>
      <ToolDivider />
      <PlainIconButton aria-label="Side panel">
        <svg width="14" height="14" viewBox="0 0 14 14">
          <path d="M1 1h12v12H1z" fill="none" stroke="#3c4043" strokeWidth="2" />
          <path d="M8 1h5v12H8z" fill="#3c4043" />
        </svg>
      </PlainIconButton>
      <PlainIconButton aria-label="Profile"><ProfileDot>S</ProfileDot></PlainIconButton>
      <PlainIconButton aria-label="Menu"><MdMoreVert size={19} /></PlainIconButton>
    </Toolbar>
  </>
);

const Header = () => (
  <SiteHeader>
    <HeaderRow>
      <Brand href="/index">
        <CloudLogo width={49} height={50} />
        扫描器系统
      </Brand>
      <Nav>
        <NavLink href="/index"><FaHome size={24} />首页</NavLink>
        <NavLink href="/vulnscan"><BugIcon size={21} />漏洞扫描</NavLink>
        <NavMenu><EarthIcon size={21} />信息收集<BsChevronDown size={12} /></NavMenu>
        <NavMenu><FaGlobe size={21} />资产收集<BsChevronDown size={12} /></NavMenu>
        <NavLink href="/navigation"><FaInternetExplorer size={22} />安全导航</NavLink>
        <ThemeToggle aria-label="主题"><SunIcon /></ThemeToggle>
      </Nav>
      <User>
        <AvatarDrawing />
        <div>
          <UserName>sectools</UserName>
          <UserRole>Security researcher</UserRole>
        </div>
      </User>
    </HeaderRow>
  </SiteHeader>
);

const ScanPanel = () => {
  const [type, setType] = useState(scanTypes[0]);
  const [url, setUrl] = useState('');

  return (
    <Card>
      <Ribbon><SearchIcon size={20} weight={3} /></Ribbon>
      <ScanForm onSubmit={(event) => event.preventDefault()}>
        <SearchRow>
          <UrlField>
            <BsLink45Deg size={25} />
            <UrlInput
              aria-label="URL"
              placeholder="请填写正确的URL"
              value={url}
              onChange={(event) => setUrl(event.target.value)}
            />
          </UrlField>
          <ScanButton type="submit"><SearchIcon size={33} weight={3} />漏洞检测</ScanButton>
        </SearchRow>
        <Divider>扫描类型</Divider>
        <Options>
          {scanTypes.map((item) => (
            <Option key={item} type="button" $active={item === type} onClick={() => setType(item)}>
              {item}
            </Option>
          ))}
          <SelectBox>
            <MiddlewareSelect aria-label="中间件漏洞" defaultValue="middleware">
              <option value="middleware">中间件漏洞</option>
            </MiddlewareSelect>
            <svg width="15" height="15" viewBox="0 0 15 15" fill="none" stroke="currentColor" strokeWidth="2">
              <path d="M1 4l6.500 7L14 4" />
            </svg>
          </SelectBox>
          <Option type="button">仅爬取</Option>
        </Options>
      </ScanForm>
    </Card>
  );
};

const WindowsTaskbar = () => (
  <Taskbar>
    <TaskButton aria-label="Start">
      <svg width="17" height="17" viewBox="0 0 17 17" fill="#fff">
        <path d="M0 2l7-1v7H0zM8 1l9-1v8H8zM0 9h7v7l-7-1zM8 9h9v8l-9-1z" />
      </svg>
    </TaskButton>
    <TaskSearch>
      <svg width="17" height="17" viewBox="0 0 17 17" fill="none" stroke="#222" strokeWidth="1.500">
        <circle cx="10" cy="6.500" r="5.500" />
        <path d="M6 11l-5 5" />
      </svg>
      <TaskInput aria-label="搜索" placeholder="搜索" />
      <Books />
    </TaskSearch>
    {taskApps.map(({ name, active, running }, i) => (
      <TaskButton key={i} $active={active} $running={running} aria-label={name}>
        <Glyph name={name} />
      </TaskButton>
    ))}
    <Tray>
      <TrayButton aria-label="Hidden icons">
        <svg width="13" height="8" viewBox="0 0 13 8" fill="none" stroke="#fff" strokeWidth="1.500">
          <path d="M1 7l5.500-5.500L12 7" />
        </svg>
      </TrayButton>
      {trayApps.map((name, i) => (
        <TrayButton key={i} aria-label={name}><Glyph name={name} size={16} /></TrayButton>
      ))}
      <TrayButton>中</TrayButton>
      <InputMethod aria-label="Input method"><Glyph name="sogou" size={16} /></InputMethod>
      <Clock>9:39</Clock>
      <TrayButton aria-label="Notifications"><Glyph name="message" size={17} /></TrayButton>
    </Tray>
  </Taskbar>
);

const App = () => (
  <Screen>
    <GlobalStyle />
    <Browser />
    <Viewport>
      <Page>
        <NetworkBackdrop />
        <Header />
        <Content as="main">
          <Card>
            <Ribbon><BsStar size={22} /></Ribbon>
            <Hero>
              <HeroTitle><BugIcon size={46} />漏洞扫描</HeroTitle>
              <HeroText>
                扫描Web应用程序中的漏洞，如SQL注入、跨站脚本攻击、身份验证页上的弱口令长度等！
                <Help>?</Help>
              </HeroText>
            </Hero>
          </Card>
          <ScanPanel />
          <ChartRow>
            <Card>
              <CardTitle>漏洞类型</CardTitle>
              <ChartArea><PieChart /></ChartArea>
            </Card>
            <Card>
              <CardTitle>危险等级和数量</CardTitle>
              <ChartArea><BarChart /></ChartArea>
            </Card>
          </ChartRow>
        </Content>
      </Page>
      <ScrollTrack>
        <svg width="8" height="6" viewBox="0 0 8 6"><path d="M0 6l4-5 4 5z" fill="#a3a3a3" /></svg>
        <ScrollThumb />
        <svg width="8" height="6" viewBox="0 0 8 6"><path d="M0 0l4 5 4-5z" fill="#505050" /></svg>
      </ScrollTrack>
      <StatusUrl>127.0.0.1:8002/index</StatusUrl>
      <Timer>00:17</Timer>
      <SideHandle />
      <Pointer width="12" height="20" viewBox="0 0 12 20">
        <path d="M1 1v15l3.500-3 2.500 6 2.500-1-2.500-6H11z" fill="#fff" stroke="#111" />
      </Pointer>
    </Viewport>
    <WindowsTaskbar />
  </Screen>
);

export default App;
